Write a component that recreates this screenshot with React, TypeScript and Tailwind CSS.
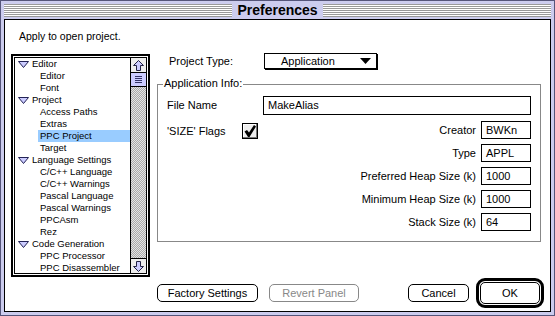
import React from "react";

interface ListItem {
	label: string;
	group?: boolean;
	selected?: boolean;
}

const ITEMS: ListItem[] = [
	{ label: "Editor", group: true },
	{ label: "Editor" },
	{ label: "Font" },
	{ label: "Project", group: true },
	{ label: "Access Paths" },
	{ label: "Extras" },
	{ label: "PPC Project", selected: true },
	{ label: "Target" },
	{ label: "Language Settings", group: true },
	{ label: "C/C++ Language" },
	{ label: "C/C++ Warnings" },
	{ label: "Pascal Language" },
	{ label: "Pascal Warnings" },
	{ label: "PPCAsm" },
	{ label: "Rez" },
	{ label: "Code Generation", group: true },
	{ label: "PPC Processor" },
	{ label: "PPC Disassembler" },
];

const FIELDS = [
	{ label: "Creator", value: "BWKn" },
	{ label: "Type", value: "APPL" },
	{ label: "Preferred Heap Size (k)", value: "1000" },
	{ label: "Minimum Heap Size (k)", value: "1000" },
	{ label: "Stack Size (k)", value: "64" },
];

const Disclosure = (): JSX.Element => (
	<svg width="11" height="7" viewBox="0 0 11 7">
		<polygon points="0.5,0.5 10.5,0.5 5.5,6.5" fill="#ccccff" stroke="#222255" />
	</svg>
);

const Arrow: React.FC<{ down?: boolean }> = ({ down }): JSX.Element => (
	<svg width="11" height="11" viewBox="0 0 11 11" className={down ? "rotate-180" : ""}>
		<path d="M5.5 0.5 L10.5 5.5 H7.5 V10.5 H3.5 V5.5 H0.5 Z" fill="#ccccff" stroke="#222244" />
	</svg>
);

const TextBox: React.FC<{ value: string; className?: string }> = (props): JSX.Element => (
	<div className={`border border-black bg-white pl-[4px] flex items-center ${props.className ?? ""}`}>
		{props.value}
	</div>
);

const Button: React.FC<{ label: string; className?: string; disabled?: boolean }> = (props): JSX.Element => (
	<div
		className={`h-[18px] rounded-[5px] border bg-white flex items-center justify-center ${
			props.disabled ? "border-[#888888] text-[#888888]" : "border-black"
		} ${props.className ?? ""}`}
	>
		{props.label}
	</div>
);

const PanelList = (): JSX.Element => {
	return (
		<div className="mt-[1px] w-[139px] h-[223px] shrink-0 border-2 border-black p-[1px] bg-white">
			<div className="h-full border border-black flex overflow-hidden">
				<div className="flex-1 text-[9.5px] leading-[12px]">
					{ITEMS.map((item, index) =>
						item.group ? (
							<div key={index} className="h-[12px] flex items-center pl-[3px]">
								<Disclosure />
								<span className="ml-[3px]">{item.label}</span>
							</div>
						) : (
							<div key={index} className="h-[12px] pl-[23px]">
								<div className={`h-full pl-[2px] ${item.selected ? "bg-[#99ccff]" : ""}`}>
									{item.label}
								</div>
							</div>
						)
					)}
				</div>
				<div className="w-[16px] border-l border-black flex flex-col">
					<div className="h-[15px] border-b border-black bg-[#eeeeee] flex items-center justify-center">
						<Arrow />
					</div>
					<div className="h-[14px] border-b border-black bg-[#ccccff] flex flex-col items-center justify-center gap-[1px]">
						<div className="w-[7px] h-[1px] bg-[#333366]" />
						<div className="w-[7px] h-[1px] bg-[#333366]" />
						<div className="w-[7px] h-[1px] bg-[#333366]" />
						<div className="w-[7px] h-[1px] bg-[#333366]" />
					</div>
					<div className="flex-1 bg-[repeating-conic-gradient(#aaaaaa_0_25%,#e4e4e4_0_50%)] bg-[length:2px_2px]" />
					<div className="h-[15px] border-t border-black bg-[#eeeeee] flex items-center justify-center">
						<Arrow down />
					</div>
				</div>
			</div>
		</div>
	);
};

const App: React.FC = (): JSX.Element => {
	return (
		<div className="w-[555px] h-[316px] bg-[#ccccee] border border-[#55557a] flex flex-col px-[3px] pb-[3px] font-['Liberation_Sans',Arial,sans-serif] text-[11px] text-black">
			{/* title bar */}
			<div className="h-[18px] flex items-center">
				<div className="flex-1 h-[13px] bg-[repeating-linear-gradient(to_bottom,#999999_0_1px,#ffffff_1px_2px)]" />
				<span className="px-[5px] text-[14px] font-bold leading-none">Preferences</span>
				<div className="flex-1 h-[13px] bg-[repeating-linear-gradient(to_bottom,#999999_0_1px,#ffffff_1px_2px)]" />
			</div>

			<div className="flex-1 bg-white border border-black flex flex-col pl-[6px] pr-[5px]">
				<p className="mt-[10px] ml-[8px] leading-[13px] text-[10.5px]">Apply to open project.</p>

				<div className="mt-[10px] flex">
					<PanelList />

					<div className="ml-[7px] w-[387px] flex flex-col">
						<div className="h-[17px] flex items-start">
							<span className="ml-[12px] w-[95px] leading-[16px]">Project Type:</span>
							<div className="w-[113px] h-[16px] border border-black bg-white shadow-[1px_1px_0_#000] flex items-center pl-[16px] pr-[5px]">
								<span className="flex-1">Application</span>
								<svg width="11" height="6" viewBox="0 0 11 6">
									<polygon points="0,0 11,0 5.5,6" fill="#000" />
								</svg>
							</div>
						</div>

						<div className="relative mt-[14px] w-[384px] border border-[#888888] pt-[11px] pb-[10px] px-[9px]">
							<span className="absolute -top-[8px] left-[5px] bg-white px-[1px] leading-[13px]">
								Application Info:
							</span>
							<div className="flex items-center h-[19px]">
								<span className="w-[96px]">File Name</span>
								<TextBox value="MakeAlias" className="w-[268px] h-[19px] pl-[3px]" />
							</div>
							<div className="mt-[6px] flex items-start">
								<div className="mt-[2px] h-[16px] flex items-center">
									<span className="w-[75px]">'SIZE' Flags</span>
									<div className="w-[16px] h-[16px] border border-black bg-[#eeeeee] shadow-[inset_-1px_-1px_0_#777777,inset_1px_1px_0_#ffffff] flex items-center justify-center">
										<svg width="12" height="12" viewBox="0 0 12 12">
											<polygon points="0.5,6.5 3,5 5,7.5 10,0 12,1.5 5.5,12 4,12" fill="#000" />
										</svg>
									</div>
								</div>
								<div className="ml-auto flex flex-col items-end gap-[5px]">
									{FIELDS.map((field, index) => (
										<div key={index} className="flex items-center gap-[5px]">
											<span>{field.label}</span>
											<TextBox value={field.value} className="w-[50px] h-[18px]" />
										</div>
									))}
								</div>
							</div>
						</div>

						<div className="mt-[36px] h-[30px] flex items-center">
							<Button label="Factory Settings" className="w-[101px]" />
							<Button label="Revert Panel" disabled className="ml-[11px] w-[90px]" />
							<Button label="Cancel" className="ml-auto w-[61px]" />
							<div className="ml-[7px] w-[68px] h-[30px] border-[3px] border-black rounded-[9px] p-[1px]">
								<div className="h-full rounded-[5px] border border-black flex items-center justify-center">
									OK
								</div>
							</div>
						</div>
					</div>
				</div>
			</div>
		</div>
	);
};

export default App;
